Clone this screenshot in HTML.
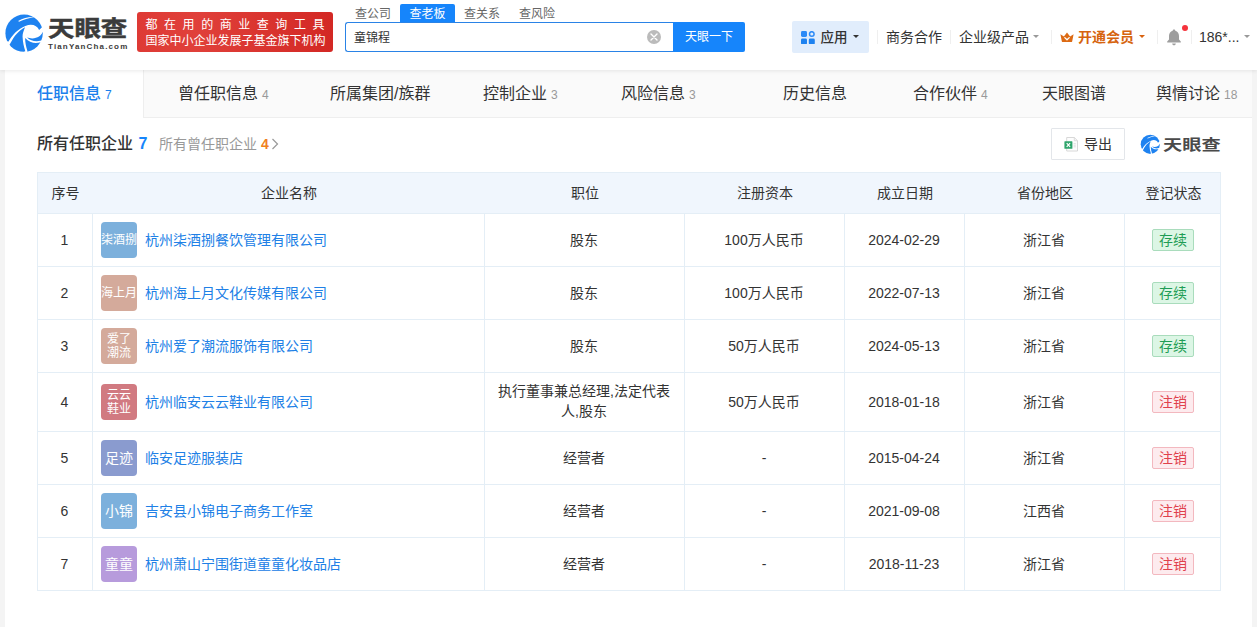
<!DOCTYPE html>
<html lang="zh-CN">
<head>
<meta charset="utf-8">
<title>童锦程 - 天眼查</title>
<style>
*{box-sizing:border-box;margin:0;padding:0}
html,body{width:1257px;height:627px;overflow:hidden}
body{position:relative;background:#f4f4f4;font-family:"Liberation Sans","Noto Sans CJK SC",sans-serif;color:#333;font-size:14px}
.abs{position:absolute;white-space:nowrap}
/* header */
#hdr{position:absolute;left:0;top:0;width:1257px;height:70px;background:#fff;box-shadow:0 1px 4px rgba(0,0,0,.09);z-index:5}
#brand{left:48px;top:13.5px;font-size:22px;line-height:30px;font-weight:bold;-webkit-text-stroke:0.5px #3b3b3b;color:#3b3b3b;transform:scaleX(1.2);transform-origin:0 0}
#brand2{left:48px;top:41px;font-size:8px;line-height:12px;font-weight:bold;color:#3b3b3b;letter-spacing:1.15px}
#banner{left:137px;top:12px;width:196px;height:40px;border-radius:3px;background:linear-gradient(90deg,#de3a35 0%,#e0403a 30%,#d32824 100%);color:#fff;font-size:12px;line-height:16.3px;padding:5px 0 0 8.5px}
#banner div{height:16.3px;white-space:nowrap}
.stab{top:5.5px;font-size:12px;line-height:16px;color:#666}
#stabact{left:400px;top:4px;width:55px;height:19px;background:#1685fb;color:#fff;border-radius:2px 2px 0 0;text-align:center;font-size:12px;line-height:20px}
#sbox{left:345px;top:22px;width:329px;height:30px;border:1px solid #2a83e6;border-right:none;border-radius:3px 0 0 3px;background:#fff}
#sbox span{position:absolute;left:8px;top:1px;line-height:28px;font-size:12px;color:#333}
#sbtn{left:673px;top:22px;width:72px;height:30px;background:#1685fb;color:#fff;font-size:12px;line-height:31px;text-align:center;border-radius:0 2px 2px 0}
#app{left:792px;top:21px;width:77px;height:32px;background:#e1edfc;border-radius:2px}
.nav{top:28px;font-size:14px;line-height:18px;color:#333}
.sep{position:absolute;top:30px;width:1px;height:14px;background:#efefef}
.caret{position:absolute;width:0;height:0;border-left:3.7px solid transparent;border-right:3.7px solid transparent;border-top:3.8px solid #999}
/* tabs */
#card{position:absolute;left:5px;top:70px;width:1247px;height:557px;background:#fff}
#tabbar{position:absolute;left:5px;top:70px;width:1247px;height:48px;background:#fafafa;border-bottom:1px solid #eee}
#tabact{position:absolute;left:5px;top:70px;width:139px;height:48px;background:#fff;border-right:1px solid #eee}
.tab{top:82.5px;font-size:16px;line-height:22px;color:#333}
.tab i{font-style:normal;font-size:12px;color:#999;margin-left:4px}
/* section */
#ttl{left:37px;top:133px;font-size:16px;line-height:22px;font-weight:500;color:#333}
#ttl b{color:#1685fb;font-weight:bold;margin-left:1px}
#ttl2{left:159px;top:134px;font-size:14px;line-height:20px;color:#999}
#ttl2 b{color:#f0801e;font-weight:bold}
#exp{left:1051px;top:128px;width:74px;height:32px;border:1px solid #e3e6ea;border-radius:1px;background:#fff}
#exp span{position:absolute;left:32px;top:0;line-height:30px;font-size:14px;color:#333}
/* table */
#tbl{position:absolute;left:37px;top:172px;width:1184px;height:419px;border:1px solid #e4eef6;border-top:none}
#th{position:absolute;left:37px;top:172px;width:1184px;height:42px;background:#f0f6fd;border:1px solid #e4eef6}
.hl{position:absolute;left:37px;width:1184px;height:1px;background:#e4eef6}
.vl{position:absolute;top:213px;width:1px;height:378px;background:#e4eef6}
.c{position:absolute;text-align:center;font-size:14px;line-height:20px;color:#333;white-space:nowrap}
.h{top:183px;margin-left:1px}
.lg{position:absolute;left:101px;width:36px;height:36px;border-radius:4px;color:#fff;text-align:center;font-size:14px;line-height:37px;white-space:nowrap;overflow:hidden}
.lg.s{font-size:12px}
.lg.two{line-height:14px;padding-top:4px;font-size:12px}
.nm{position:absolute;left:145px;font-size:14px;line-height:20px;color:#2080e6;white-space:nowrap}
.tg{position:absolute;left:1152px;width:42px;height:22px;border-radius:2px;font-size:14px;line-height:20px;text-align:center}
.g{background:#dcf6e5;border:1px solid #a9dcbc;color:#1f9d55}
.r{background:#fdebee;border:1px solid #f3b8bf;color:#e0404c}
</style>
</head>
<body>
<div id="hdr">
  <svg class="abs" style="left:4px;top:13px" width="40" height="40" viewBox="0 0 627 627">
    <defs><clipPath id="lc"><circle cx="315" cy="316" r="293"/></clipPath></defs>
    <g clip-path="url(#lc)" fill="#1e82f0">
      <path d="M72,448 L-20,448 L-20,-20 L650,-20 L650,190 L597,225 L550,268 C520,190 430,160 335,203 C220,250 130,340 72,448 Z"/>
      <path d="M98,480 C156,358 238,268 330,222 C302,290 288,330 292,380 C295,450 310,530 335,600 L200,660 L40,560 Z"/>
      <path d="M607,298 C590,350 520,400 440,398 C410,396 385,392 362,384 C420,440 500,455 583,432 L650,420 L650,298 Z"/>
      <path d="M332,392 C400,472 500,484 575,457 L650,470 L600,660 L365,660 L365,588 C343,520 330,450 332,392 Z"/>
    </g>
    <path d="M222,126 C300,76 380,58 476,62 C380,80 310,104 236,136 Z" fill="#fff"/>
  </svg>
  <div class="abs" id="brand">天眼查</div>
  <div class="abs" id="brand2">TianYanCha.com</div>
  <div class="abs" id="banner"><div style="letter-spacing:6.55px">都在用的商业查询工具</div><div>国家中小企业发展子基金旗下机构</div></div>

  <div class="abs stab" style="left:355px">查公司</div>
  <div class="abs" id="stabact">查老板</div>
  <div class="abs stab" style="left:464px">查关系</div>
  <div class="abs stab" style="left:519px">查风险</div>
  <div class="abs" id="sbox"><span>童锦程</span></div>
  <svg class="abs" style="left:646px;top:29px" width="16" height="16" viewBox="0 0 16 16"><circle cx="8" cy="8" r="7" fill="#bbb"/><path d="M5 5 L11 11 M11 5 L5 11" stroke="#fff" stroke-width="1.4" stroke-linecap="round"/></svg>
  <div class="abs" id="sbtn">天眼一下</div>

  <div class="abs" id="app"></div>
  <svg class="abs" style="left:801px;top:30.5px" width="14" height="13.5" viewBox="0 0 14 13.5"><rect x="0" y="0" width="6" height="6" rx="1.4" fill="#2b8af7"/><circle cx="10.8" cy="3" r="2.3" fill="none" stroke="#2b8af7" stroke-width="1.5"/><rect x="0" y="7.5" width="6" height="6" rx="1.4" fill="#1e82f0"/><rect x="7.8" y="7.5" width="6" height="6" rx="1.4" fill="#1e82f0"/></svg>
  <div class="abs nav" style="left:820.5px;top:28.5px;font-weight:500;font-size:13.5px">应用</div>
  <div class="caret" style="left:853px;top:35px;border-top-color:#333"></div>
  <div class="sep" style="left:877px"></div>
  <div class="abs nav" style="left:886px">商务合作</div>
  <div class="sep" style="left:950px"></div>
  <div class="abs nav" style="left:959px">企业级产品</div>
  <div class="caret" style="left:1033px;top:35px"></div>
  <div class="sep" style="left:1051px"></div>
  <svg class="abs" style="left:1060px;top:31.5px" width="14" height="10.5" viewBox="0 0 14 10.5"><path d="M0.4 2.2 L3.9 4.6 L7 0.5 L10.1 4.6 L13.6 2.2 L12.2 9.2 C12.1 9.8 11.7 10.2 11.1 10.2 L2.9 10.2 C2.3 10.2 1.9 9.8 1.8 9.2 Z" fill="#dc6a14"/><path d="M4.8 5.6 L7 7.8 L9.2 5.6" fill="none" stroke="#fff" stroke-width="1.3" stroke-linecap="round" stroke-linejoin="round"/></svg>
  <div class="abs nav" style="left:1078px;color:#d6640f;font-weight:bold">开通会员</div>
  <div class="caret" style="left:1139px;top:35px;border-top-color:#d9620f"></div>
  <div class="sep" style="left:1157px"></div>
  <svg class="abs" style="left:1166px;top:28px" width="16" height="18" viewBox="0 0 16 18"><path d="M8 1.5 C8.8 1.5 9.3 2 9.3 2.7 C11.8 3.4 13 5.4 13 8 L13 11.5 L14.8 13.6 L14.8 14.4 L1.2 14.4 L1.2 13.6 L3 11.5 L3 8 C3 5.4 4.2 3.4 6.7 2.7 C6.7 2 7.2 1.5 8 1.5 Z" fill="#9e9e9e"/><path d="M6.2 15.4 L9.8 15.4 C9.8 16.4 9 17.2 8 17.2 C7 17.2 6.2 16.4 6.2 15.4 Z" fill="#9e9e9e"/></svg>
  <div class="abs" style="left:1182px;top:25px;width:6px;height:6px;border-radius:3px;background:#f5333c"></div>
  <div class="sep" style="left:1191px"></div>
  <div class="abs nav" style="left:1199px">186*...</div>
  <div class="caret" style="left:1243.5px;top:35px"></div>
</div>

<div id="card"></div>
<div id="tabbar"></div>
<div id="tabact"></div>
<div class="abs tab" style="left:37px;color:#1a80ec;font-weight:500">任职信息<i style="color:#1a80ec">7</i></div>
<div class="abs tab" style="left:178px">曾任职信息<i>4</i></div>
<div class="abs tab" style="left:330px">所属集团/族群</div>
<div class="abs tab" style="left:483px">控制企业<i>3</i></div>
<div class="abs tab" style="left:621px">风险信息<i>3</i></div>
<div class="abs tab" style="left:783px">历史信息</div>
<div class="abs tab" style="left:913px">合作伙伴<i>4</i></div>
<div class="abs tab" style="left:1042px">天眼图谱</div>
<div class="abs tab" style="left:1156px">舆情讨论<i>18</i></div>

<div class="abs" id="ttl">所有任职企业 <b>7</b></div>
<div class="abs" id="ttl2">所有曾任职企业 <b>4</b></div>
<svg class="abs" style="left:271px;top:138px" width="8" height="12" viewBox="0 0 8 12"><path d="M1.5 1 L6.5 6 L1.5 11" fill="none" stroke="#999" stroke-width="1.2"/></svg>

<div class="abs" id="exp"><span>导出</span></div>
<svg class="abs" style="left:1064px;top:136.5px" width="14" height="15" viewBox="0 0 14 15"><path d="M2.7 0.5 L10.3 0.5 L13.5 3.7 L13.5 14 L2.7 14 Z" fill="#fdfdfd" stroke="#d4d4d4" stroke-width="0.9"/><path d="M10.3 0.5 L10.3 3.7 L13.5 3.7" fill="none" stroke="#d4d4d4" stroke-width="0.8"/><rect x="0.4" y="4.2" width="8" height="7.6" rx="0.6" fill="#2fa56c"/><path d="M2.7 6.1 L6.1 9.9 M6.1 6.1 L2.7 9.9" stroke="#fff" stroke-width="1.2"/><path d="M9.6 6.6h2.2M9.6 8.2h2.2M9.6 9.8h2.2" stroke="#d9d9d9" stroke-width="0.8"/></svg>
<svg class="abs" style="left:1140.3px;top:134px" width="20.5" height="20.5" viewBox="0 0 627 627">
    <defs><clipPath id="lc2"><circle cx="315" cy="316" r="293"/></clipPath></defs>
    <g clip-path="url(#lc2)" fill="#1e82f0">
      <path d="M72,448 L-20,448 L-20,-20 L650,-20 L650,190 L597,225 L550,268 C520,190 430,160 335,203 C220,250 130,340 72,448 Z"/>
      <path d="M98,480 C156,358 238,268 330,222 C302,290 288,330 292,380 C295,450 310,530 335,600 L200,660 L40,560 Z"/>
      <path d="M607,298 C590,350 520,400 440,398 C410,396 385,392 362,384 C420,440 500,455 583,432 L650,420 L650,298 Z"/>
      <path d="M332,392 C400,472 500,484 575,457 L650,470 L600,660 L365,660 L365,588 C343,520 330,450 332,392 Z"/>
    </g>
    <path d="M222,126 C300,76 380,58 476,62 C380,80 310,104 236,136 Z" fill="#fff"/>
</svg>
<div class="abs" style="left:1163px;top:133.5px;font-size:15px;line-height:22px;font-weight:bold;color:#4a4a4a;transform:scaleX(1.28);transform-origin:0 0">天眼查</div>

<div id="tbl"></div>
<div id="th"></div>
<!--ROWS-->
<div class="c h" style="left:37px;width:55px">序号</div>
<div class="c h" style="left:92px;width:392px">企业名称</div>
<div class="c h" style="left:484px;width:200px">职位</div>
<div class="c h" style="left:684px;width:160px">注册资本</div>
<div class="c h" style="left:844px;width:120px">成立日期</div>
<div class="c h" style="left:964px;width:160px">省份地区</div>
<div class="c h" style="left:1124px;width:97px">登记状态</div>
<div class="vl" style="left:92px"></div>
<div class="vl" style="left:484px"></div>
<div class="vl" style="left:684px"></div>
<div class="vl" style="left:844px"></div>
<div class="vl" style="left:964px"></div>
<div class="vl" style="left:1124px"></div>
<div class="c" style="left:37px;width:55px;top:229.5px">1</div>
<div class="lg s" style="top:221.5px;background:#7cb0dc">柒酒捌</div>
<div class="nm" style="top:229.5px">杭州柒酒捌餐饮管理有限公司</div>
<div class="c" style="left:484px;width:200px;top:229.5px">股东</div>
<div class="c" style="left:684px;width:160px;top:229.5px">100万人民币</div>
<div class="c" style="left:844px;width:120px;top:229.5px">2024-02-29</div>
<div class="c" style="left:964px;width:160px;top:229.5px">浙江省</div>
<div class="tg g" style="top:228.5px">存续</div>
<div class="hl" style="top:266px"></div>
<div class="c" style="left:37px;width:55px;top:282.5px">2</div>
<div class="lg s" style="top:274.5px;background:#d4aa9b">海上月</div>
<div class="nm" style="top:282.5px">杭州海上月文化传媒有限公司</div>
<div class="c" style="left:484px;width:200px;top:282.5px">股东</div>
<div class="c" style="left:684px;width:160px;top:282.5px">100万人民币</div>
<div class="c" style="left:844px;width:120px;top:282.5px">2022-07-13</div>
<div class="c" style="left:964px;width:160px;top:282.5px">浙江省</div>
<div class="tg g" style="top:281.5px">存续</div>
<div class="hl" style="top:319px"></div>
<div class="c" style="left:37px;width:55px;top:335.5px">3</div>
<div class="lg two" style="top:327.5px;background:#d4aa9b">爱了<br>潮流</div>
<div class="nm" style="top:335.5px">杭州爱了潮流服饰有限公司</div>
<div class="c" style="left:484px;width:200px;top:335.5px">股东</div>
<div class="c" style="left:684px;width:160px;top:335.5px">50万人民币</div>
<div class="c" style="left:844px;width:120px;top:335.5px">2024-05-13</div>
<div class="c" style="left:964px;width:160px;top:335.5px">浙江省</div>
<div class="tg g" style="top:334.5px">存续</div>
<div class="hl" style="top:372px"></div>
<div class="c" style="left:37px;width:55px;top:391.5px">4</div>
<div class="lg two" style="top:383.5px;background:#d17a81">云云<br>鞋业</div>
<div class="nm" style="top:391.5px">杭州临安云云鞋业有限公司</div>
<div class="c" style="left:484px;width:200px;top:380.5px">执行董事兼总经理,法定代表<br>人,股东</div>
<div class="c" style="left:684px;width:160px;top:391.5px">50万人民币</div>
<div class="c" style="left:844px;width:120px;top:391.5px">2018-01-18</div>
<div class="c" style="left:964px;width:160px;top:391.5px">浙江省</div>
<div class="tg r" style="top:390.5px">注销</div>
<div class="hl" style="top:431px"></div>
<div class="c" style="left:37px;width:55px;top:447.5px">5</div>
<div class="lg " style="top:439.5px;background:#8a9bcf">足迹</div>
<div class="nm" style="top:447.5px">临安足迹服装店</div>
<div class="c" style="left:484px;width:200px;top:447.5px">经营者</div>
<div class="c" style="left:684px;width:160px;top:447.5px">-</div>
<div class="c" style="left:844px;width:120px;top:447.5px">2015-04-24</div>
<div class="c" style="left:964px;width:160px;top:447.5px">浙江省</div>
<div class="tg r" style="top:446.5px">注销</div>
<div class="hl" style="top:484px"></div>
<div class="c" style="left:37px;width:55px;top:500.5px">6</div>
<div class="lg " style="top:492.5px;background:#7cb0dc">小锦</div>
<div class="nm" style="top:500.5px">吉安县小锦电子商务工作室</div>
<div class="c" style="left:484px;width:200px;top:500.5px">经营者</div>
<div class="c" style="left:684px;width:160px;top:500.5px">-</div>
<div class="c" style="left:844px;width:120px;top:500.5px">2021-09-08</div>
<div class="c" style="left:964px;width:160px;top:500.5px">江西省</div>
<div class="tg r" style="top:499.5px">注销</div>
<div class="hl" style="top:537px"></div>
<div class="c" style="left:37px;width:55px;top:553.5px">7</div>
<div class="lg " style="top:545.5px;background:#b79bdc">童童</div>
<div class="nm" style="top:553.5px">杭州萧山宁围街道童童化妆品店</div>
<div class="c" style="left:484px;width:200px;top:553.5px">经营者</div>
<div class="c" style="left:684px;width:160px;top:553.5px">-</div>
<div class="c" style="left:844px;width:120px;top:553.5px">2018-11-23</div>
<div class="c" style="left:964px;width:160px;top:553.5px">浙江省</div>
<div class="tg r" style="top:552.5px">注销</div>
<!--/ROWS-->
</body>
</html>
